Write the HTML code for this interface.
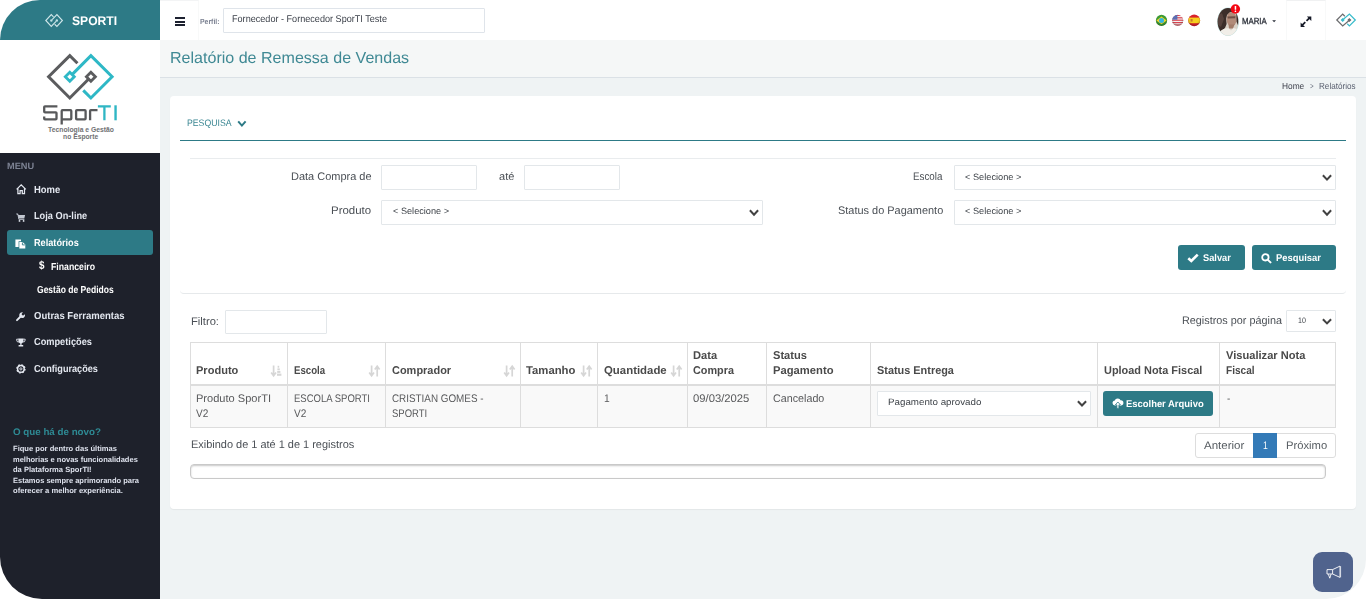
<!DOCTYPE html>
<html><head><meta charset="utf-8"><title>SporTI</title>
<style>
*{box-sizing:border-box;margin:0;padding:0}
html,body{width:1366px;height:599px;overflow:hidden;background:#fff;font-family:"Liberation Sans",sans-serif}
#app{position:absolute;left:0;top:0;width:1366px;height:599px;background:#eff3f4;border-bottom-right-radius:40px;overflow:hidden}
.t{position:absolute;white-space:nowrap;display:block;text-rendering:geometricPrecision}
.b{position:absolute}
svg{position:absolute;overflow:visible}

#side{position:absolute;left:0;top:0;width:160px;height:599px;background:#fff}
#shead{position:absolute;left:0;top:0;width:160px;height:40px;background:#2d7a86;border-top-left-radius:43px}
#sdark{position:absolute;left:0;top:153px;width:160px;height:446px;background:#1e212b;border-bottom-left-radius:42px}
#act{position:absolute;left:7px;top:230px;width:146px;height:25px;background:#2d7a86;border-radius:3px}
#top{position:absolute;left:160px;top:0;width:1206px;height:40px;background:#fff}
#tbar{position:absolute;left:160px;top:40px;width:1206px;height:38px;background:#f5f7f7;border-bottom:1px solid #dbe1e6}
#card{position:absolute;left:170px;top:96px;width:1186px;height:413px;background:#fff;border-radius:4px;box-shadow:0 1px 1px rgba(0,0,0,.05)}
.inp{position:absolute;background:#fff;border:1px solid #e3e7ea;border-radius:1px}
.btn{position:absolute;background:#2d7a86;border-radius:3px}
.ln{position:absolute;height:1px}
.vl{position:absolute;width:1px;background:#ddd;top:342px;height:86px}

</style></head><body>
<div id="app">
<div id="side"><div id="shead"></div><div id="sdark"></div><div id="act"></div></div>
<svg style="left:44.8px;top:14.0px" width="18.2" height="13.2" viewBox="0 0 19 14">
<g fill="none" stroke="#cfe6e9" stroke-width="1.2" stroke-linejoin="miter">
<path d="M8.9,3.0 L6.5,0.7 L0.7,6.9 L6.5,13.1 L11.6,7.9"/>
<path d="M10.1,10.9 L12.5,13.2 L18.3,6.9 L12.5,0.7 L7.4,6.0"/>
</g>
<circle cx="6.6" cy="6.9" r="1.25" fill="#bfe2e6"/><circle cx="12.4" cy="6.9" r="1.25" fill="#bfe2e6"/>
</svg>
<svg style="left:0;top:0" width="1366" height="599"><path d="M77.43,63.23 L69.80,55.60 L48.60,76.80 L69.80,98.00 L88.43,79.27" fill="none" stroke="#5b5c5e" stroke-width="3.0" stroke-linejoin="miter" stroke-linecap="butt"/><path d="M83.27,90.37 L90.90,98.00 L112.10,76.80 L90.90,55.60 L72.27,74.33" fill="none" stroke="#2eb8c6" stroke-width="3.0" stroke-linejoin="miter" stroke-linecap="butt"/><path d="M69.80,72.30 L74.30,76.80 L69.80,81.30 L65.30,76.80 Z" fill="#fff" stroke="#2eb8c6" stroke-width="2.8"/><path d="M90.90,72.30 L95.40,76.80 L90.90,81.30 L86.40,76.80 Z" fill="#fff" stroke="#5b5c5e" stroke-width="2.8"/></svg>
<svg style="left:0;top:0" width="1366" height="599">
<g fill="none" stroke="#58595b" stroke-width="2.3" stroke-linejoin="round" stroke-linecap="butt">
<path d="M57.4,106.3 H45.0 Q44.2,106.3 44.2,107.1 V111.5 Q44.2,112.3 45.0,112.3 H55.7 Q56.5,112.3 56.5,113.1 V118.5 Q56.5,119.3 55.7,119.3 H45.0 Q44.2,119.3 44.2,118.5 V116.6"/>
<path d="M61.7,124.5 V110.9 Q61.7,110.1 62.5,110.1 H70.5 Q71.3,110.1 71.3,110.9 V118.5 Q71.3,119.3 70.5,119.3 H61.7"/>
<path d="M76.9,110.1 H84.8 Q85.6,110.1 85.6,110.9 V118.5 Q85.6,119.3 84.8,119.3 H76.9 Q76.1,119.3 76.1,118.5 V110.9 Q76.1,110.1 76.9,110.1 Z"/>
<path d="M90.1,120.3 V110.9 Q90.1,110.1 90.9,110.1 H97.5"/>
</g>
<g fill="none" stroke="#2fb6c4" stroke-linecap="butt">
<path d="M97.9,106.35 H110.8 M104.4,106.3 V120.3" stroke-width="2.3"/>
<path d="M115.55,105.3 V120.3" stroke-width="2.4"/>
</g></svg>
<svg style="left:45px;top:124px" width="72" height="18" viewBox="0 0 72 18">
<text x="3.1" y="7.6" font-family="Liberation Sans, sans-serif" font-size="6.3" font-weight="bold" fill="#707173" textLength="65.9" lengthAdjust="spacingAndGlyphs">Tecnologia e Gestão</text>
<text x="18.1" y="14.6" font-family="Liberation Sans, sans-serif" font-size="6.3" font-weight="bold" fill="#707173" textLength="35.1" lengthAdjust="spacingAndGlyphs">no Esporte</text>
</svg>
<svg style="left:15.5px;top:183.6px" width="10.4" height="10.4" viewBox="0 0 10.4 10.4">
<path d="M0.6,5.4 L5.2,0.9 L9.8,5.4 M1.9,4.6 V9.6 H4.1 V6.6 H6.3 V9.6 H8.5 V4.6" fill="none" stroke="#e4e8f0" stroke-width="1.25" stroke-linejoin="miter"/></svg>
<svg style="left:16px;top:212.6px" width="9.6" height="9" viewBox="0 0 9.6 9">
<path d="M0.3,0.9 H1.8 L2.6,5.6 H8.3 L9.1,1.9 H2.2 Z" fill="#c3c8d2"/><path d="M0.3,0.9 H1.8 L2.9,6.4 H8.4" fill="none" stroke="#c3c8d2" stroke-width="0.9"/>
<circle cx="3.5" cy="7.9" r="0.9" fill="#e4e8f0"/><circle cx="7.6" cy="7.9" r="0.9" fill="#e4e8f0"/></svg>
<svg style="left:15.4px;top:238.6px" width="10.8" height="10" viewBox="0 0 10.8 10">
<path d="M0.4,0.4 H6 V2.2 H3.6 V7.9 H0.4 Z" fill="#fff"/>
<path d="M4.3,2.9 H7.6 L10.3,5.6 V9.6 H4.3 Z" fill="#fff"/>
<path d="M7.4,3.4 V5.9 H9.9" fill="none" stroke="#2d7a86" stroke-width="0.9"/></svg>
<svg style="left:15.8px;top:311.5px" width="9.2" height="9.2" viewBox="0 0 9.2 9.2">
<path d="M1.0,8.2 L5.4,3.8" stroke="#e4e8f0" stroke-width="1.9" stroke-linecap="round" fill="none"/>
<path d="M8.9,2.2 A2.9,2.9 0 1 1 6.9,0.3 L5.6,1.9 L6.0,3.2 L7.3,3.6 Z" fill="#e4e8f0"/></svg>
<svg style="left:15.8px;top:337.8px" width="9.8" height="9" viewBox="0 0 9.8 9">
<path d="M2.4,0.4 H7.4 V2.6 A2.5,2.8 0 0 1 2.4,2.6 Z" fill="#e4e8f0"/>
<path d="M2.6,1.2 H0.6 V1.9 A2.2,2.2 0 0 0 3.2,4.0 M7.2,1.2 H9.2 V1.9 A2.2,2.2 0 0 1 6.6,4.0" fill="none" stroke="#e4e8f0" stroke-width="0.9"/>
<path d="M4.3,5 H5.5 V7.0 H7.2 V8.6 H2.6 V7.0 H4.3 Z" fill="#e4e8f0"/></svg>
<svg style="left:15.8px;top:364.3px" width="9.8" height="9.8" viewBox="-4.9 -4.9 9.8 9.8">
<circle r="3.3" fill="none" stroke="#e4e8f0" stroke-width="1.5"/><circle r="3.9" fill="none" stroke="#e4e8f0" stroke-width="1.6" stroke-dasharray="1.53 1.53"/>
<circle r="1.1" fill="none" stroke="#e4e8f0" stroke-width="0.9"/></svg>
<div id="top"></div>
<div class="b" style="left:160px;top:0;width:39px;height:40px;border-top:1px solid #f3f4f5;border-right:1px solid #f8f9f9"></div>
<div class="b" style="left:1286px;top:0;width:40px;height:40px;border-top:1px solid #f0f1f2;border-right:1px solid #f8f9f9;border-left:1px solid #f8f9f9"></div>
<div class="b" style="left:174.8px;top:17px;width:10.6px;height:2px;background:#1d2130"></div>
<div class="b" style="left:174.8px;top:20.5px;width:10.6px;height:2px;background:#1d2130"></div>
<div class="b" style="left:174.8px;top:24px;width:10.6px;height:2px;background:#1d2130"></div>
<div class="inp" style="left:223.4px;top:8px;width:261.4px;height:24.5px;border-color:#dfe4ea"></div>
<svg style="left:1155px;top:14px" width="47" height="13" viewBox="0 0 47 13">
<defs><clipPath id="c1"><circle cx="6.5" cy="6.4" r="5.6"/></clipPath><clipPath id="c2"><circle cx="22.7" cy="6.4" r="5.6"/></clipPath><clipPath id="c3"><circle cx="39.2" cy="6.4" r="5.9"/></clipPath>
<radialGradient id="sh" cx="50%" cy="35%" r="65%"><stop offset="60%" stop-color="#000" stop-opacity="0"/><stop offset="100%" stop-color="#000" stop-opacity=".28"/></radialGradient></defs>
<g clip-path="url(#c1)"><rect x="0" y="0" width="13" height="13" fill="#3c9b35"/><path d="M1.3,6.4 L6.5,2.6 L11.7,6.4 L6.5,10.2 Z" fill="#f3d32a"/><circle cx="6.5" cy="6.4" r="2.5" fill="#35b5e0"/></g>
<circle cx="6.5" cy="6.4" r="5.6" fill="url(#sh)"/>
<g clip-path="url(#c2)"><rect x="16" y="0" width="14" height="13" fill="#f3f0f0"/>
<rect x="16" y="0.8" width="14" height="1.2" fill="#d9434f"/><rect x="16" y="3.2" width="14" height="1.2" fill="#d9434f"/><rect x="16" y="5.6" width="14" height="1.2" fill="#d9434f"/><rect x="16" y="8" width="14" height="1.2" fill="#d9434f"/><rect x="16" y="10.4" width="14" height="1.2" fill="#d9434f"/>
<rect x="16" y="0" width="6.4" height="5.7" fill="#5a6fb4"/></g>
<circle cx="22.7" cy="6.4" r="5.6" fill="url(#sh)"/>
<g clip-path="url(#c3)"><rect x="33" y="0" width="13" height="13" fill="#d9222c"/><rect x="33" y="3.6" width="13" height="5.6" fill="#f6cf1d"/><rect x="35.6" y="5" width="2" height="2.6" fill="#c9772b"/></g>
<circle cx="39.2" cy="6.4" r="5.9" fill="url(#sh)"/>
</svg>
<svg style="left:1216px;top:7px" width="24" height="30" viewBox="0 0 24 30">
<defs><clipPath id="av"><ellipse cx="12" cy="14.8" rx="10.4" ry="13.7"/></clipPath>
<filter id="bl" x="-20%" y="-20%" width="140%" height="140%"><feGaussianBlur stdDeviation="0.75"/></filter></defs>
<ellipse cx="12" cy="14.8" rx="10.9" ry="14.2" fill="#bfe6e6"/>
<g clip-path="url(#av)"><rect x="0" y="0" width="24" height="30" fill="#d9d2c8"/>
<g filter="url(#bl)">
<path d="M0,0 H24 V7 L21.5,5.5 L18,4.6 L14,5.2 L11,8 L10.2,12 L10.6,17 L9,21 L5,24.5 L0,24 Z" fill="#3a2d29"/>
<path d="M2,8 L6,6 L8,12 L5,20 L2,18 Z" fill="#54433c"/>
<ellipse cx="15.6" cy="12.2" rx="5.0" ry="7.2" fill="#b18b79"/>
<path d="M11.6,9.6 L19.4,9.2 L19.2,11.2 L11.8,11.6 Z" fill="#6e5147"/>
<path d="M20.2,5 L22.6,9 L22.4,19 L20.6,15 Z" fill="#3a2c28"/>
<path d="M12.5,17.5 L18.5,17.5 L17,21.5 L13,21.5 Z" fill="#a27b69"/>
<path d="M3.5,25 Q8,20.5 13,21.5 L15,23.5 L17.5,21 Q21,21.5 22.5,24 V30 H2 Z" fill="#f1eee8"/>
</g></g></svg>
<svg style="left:1230px;top:4px" width="11" height="11" viewBox="0 0 11 11"><circle cx="5.4" cy="5" r="4.7" fill="#f40612"/><rect x="4.7" y="2" width="1.5" height="3.8" rx=".4" fill="#fff"/><rect x="4.7" y="6.6" width="1.5" height="1.5" rx=".4" fill="#fff"/></svg>
<svg style="left:1272px;top:20px" width="5" height="3" viewBox="0 0 5 3"><path d="M0.2,0.2 H4.0 L2.1,2.2 Z" fill="#2a2e38"/></svg>
<svg style="left:0;top:0" width="1366" height="599">
<path d="M1306.5,20.9 L1309.6,17.8" stroke="#151926" stroke-width="1.7" fill="none"/>
<path d="M1305.3,22.1 L1302.3,25.1" stroke="#151926" stroke-width="1.7" fill="none"/>
<path d="M1306.9,16.6 H1311.3 V21.0 Z" fill="#151926"/><path d="M1300.6,22.6 V27.0 H1305.0 Z" fill="#151926"/></svg>
<svg style="left:0;top:0" width="1366" height="599"><path d="M1344.82,16.22 L1342.70,14.10 L1336.80,20.00 L1342.70,25.90 L1348.74,20.66" fill="none" stroke="#6b6c6e" stroke-width="1.25" stroke-linejoin="miter" stroke-linecap="butt"/><path d="M1347.28,23.78 L1349.40,25.90 L1355.30,20.00 L1349.40,14.10 L1343.36,19.34" fill="none" stroke="#38bccb" stroke-width="1.25" stroke-linejoin="miter" stroke-linecap="butt"/><path d="M1342.70,18.80 L1343.90,20.00 L1342.70,21.20 L1341.50,20.00 Z" fill="#38bccb" stroke="#38bccb" stroke-width="1.2"/><path d="M1349.40,18.80 L1350.60,20.00 L1349.40,21.20 L1348.20,20.00 Z" fill="#6b6c6e" stroke="#6b6c6e" stroke-width="1.2"/></svg>
<div id="tbar"></div>
<div id="card"></div>
<svg style="left:0;top:0" width="1366" height="599"><path d="M238.2,121.4 L241.9,125.6 L245.6,121.4" fill="none" stroke="#2d7a86" stroke-width="2.0" stroke-linecap="butt" stroke-linejoin="miter"/></svg>
<div class="ln" style="left:180px;top:139.7px;width:1166px;height:1.4px;background:#2d7a86"></div>
<div class="ln" style="left:190px;top:158px;width:1146px;background:#e9ecee"></div>
<div class="inp" style="left:381px;top:165px;width:96px;height:24.5px"></div>
<div class="inp" style="left:524px;top:165px;width:96px;height:24.5px"></div>
<div class="inp" style="left:954px;top:165px;width:382px;height:24.5px"></div>
<div class="inp" style="left:381px;top:200px;width:382px;height:24.5px"></div>
<div class="inp" style="left:954px;top:200px;width:382px;height:24.5px"></div>
<div class="inp" style="left:225px;top:310px;width:102px;height:23.8px"></div>
<div class="inp" style="left:1286px;top:310.4px;width:50px;height:21.2px"></div>
<svg style="left:0;top:0" width="1366" height="599"><path d="M1322.9,175.2 L1327.0,179.6 L1331.1,175.2" fill="none" stroke="#424242" stroke-width="2.0" stroke-linecap="butt" stroke-linejoin="miter"/></svg>
<svg style="left:0;top:0" width="1366" height="599"><path d="M1322.9,210.3 L1327.0,214.7 L1331.1,210.3" fill="none" stroke="#424242" stroke-width="2.0" stroke-linecap="butt" stroke-linejoin="miter"/></svg>
<svg style="left:0;top:0" width="1366" height="599"><path d="M749.9,210.3 L754.0,214.7 L758.1,210.3" fill="none" stroke="#424242" stroke-width="2.0" stroke-linecap="butt" stroke-linejoin="miter"/></svg>
<svg style="left:0;top:0" width="1366" height="599"><path d="M1322.9,319.2 L1327.0,323.4 L1331.1,319.2" fill="none" stroke="#424242" stroke-width="2.0" stroke-linecap="butt" stroke-linejoin="miter"/></svg>
<div class="btn" style="left:1178px;top:245px;width:67px;height:25px"></div>
<div class="btn" style="left:1252px;top:245px;width:84px;height:25px"></div>
<svg style="left:1186.6px;top:252.8px" width="12" height="10" viewBox="0 0 12 10"><path d="M1.3,5.2 L4.3,8.0 L10.7,1.6" fill="none" stroke="#fff" stroke-width="2.6"/></svg>
<svg style="left:1260.8px;top:253.2px" width="11" height="10" viewBox="0 0 11 10"><circle cx="4.4" cy="4.3" r="3.2" fill="none" stroke="#fff" stroke-width="1.8"/><path d="M6.9,6.9 L9.5,9.4" stroke="#fff" stroke-width="2.0" stroke-linecap="round"/></svg>
<div class="b" style="left:180px;top:284px;width:1166px;height:10px;border-bottom:1px solid #e6e9eb;border-radius:0 0 4px 4px"></div>
<div class="b" style="left:190px;top:386px;width:1146px;height:42px;background:#f9f9f9"></div>
<div class="b" style="left:190px;top:342px;width:1146px;height:86px;border:1px solid #ddd"></div>
<div class="ln" style="left:190px;top:384px;width:1146px;height:2px;background:#ddd"></div>
<div class="vl" style="left:287px"></div>
<div class="vl" style="left:385px"></div>
<div class="vl" style="left:520px"></div>
<div class="vl" style="left:597px"></div>
<div class="vl" style="left:687px"></div>
<div class="vl" style="left:766px"></div>
<div class="vl" style="left:870px"></div>
<div class="vl" style="left:1097px"></div>
<div class="vl" style="left:1219px"></div>
<svg style="left:271px;top:364.6px" width="11" height="12" viewBox="0 0 11 12"><path d="M2.6,0.6 V10.6 M0.2,7.6 L2.6,10.9 L5.0,7.6" fill="none" stroke="#d6d6d6" stroke-width="1.7"/><rect x="6.6" y="0.8" width="1.6" height="1.9" fill="#d6d6d6"/><rect x="6.4" y="3.4" width="2.4" height="1.9" fill="#d6d6d6"/><rect x="6.2" y="6.0" width="3.2" height="1.9" fill="#d6d6d6"/><rect x="6.0" y="8.6" width="4.4" height="2.2" fill="#d6d6d6"/></svg>
<svg style="left:369px;top:364.6px" width="11" height="12" viewBox="0 0 11 12"><path d="M2.6,0.6 V10.6 M0.2,7.6 L2.6,10.9 L5.0,7.6" fill="none" stroke="#d6d6d6" stroke-width="1.7"/><path d="M8.2,11.4 V1.4 M5.8,4.4 L8.2,1.1 L10.6,4.4" fill="none" stroke="#d6d6d6" stroke-width="1.7"/></svg>
<svg style="left:504px;top:364.6px" width="11" height="12" viewBox="0 0 11 12"><path d="M2.6,0.6 V10.6 M0.2,7.6 L2.6,10.9 L5.0,7.6" fill="none" stroke="#d6d6d6" stroke-width="1.7"/><path d="M8.2,11.4 V1.4 M5.8,4.4 L8.2,1.1 L10.6,4.4" fill="none" stroke="#d6d6d6" stroke-width="1.7"/></svg>
<svg style="left:581px;top:364.6px" width="11" height="12" viewBox="0 0 11 12"><path d="M2.6,0.6 V10.6 M0.2,7.6 L2.6,10.9 L5.0,7.6" fill="none" stroke="#d6d6d6" stroke-width="1.7"/><path d="M8.2,11.4 V1.4 M5.8,4.4 L8.2,1.1 L10.6,4.4" fill="none" stroke="#d6d6d6" stroke-width="1.7"/></svg>
<svg style="left:671px;top:364.6px" width="11" height="12" viewBox="0 0 11 12"><path d="M2.6,0.6 V10.6 M0.2,7.6 L2.6,10.9 L5.0,7.6" fill="none" stroke="#d6d6d6" stroke-width="1.7"/><path d="M8.2,11.4 V1.4 M5.8,4.4 L8.2,1.1 L10.6,4.4" fill="none" stroke="#d6d6d6" stroke-width="1.7"/></svg>
<div class="inp" style="left:877px;top:391px;width:214px;height:24.5px"></div>
<svg style="left:0;top:0" width="1366" height="599"><path d="M1077.9,401.2 L1082.0,405.5 L1086.1,401.2" fill="none" stroke="#424242" stroke-width="2.0" stroke-linecap="butt" stroke-linejoin="miter"/></svg>
<div class="btn" style="left:1103px;top:391px;width:110px;height:24.5px"></div>
<svg style="left:1112px;top:398.4px" width="12" height="11.4" viewBox="0 0 12 11.4">
<g fill="#fff"><circle cx="3.0" cy="4.9" r="2.5"/><circle cx="5.7" cy="3.3" r="2.9"/><circle cx="8.8" cy="4.8" r="2.6"/><rect x="3" y="5" width="6" height="2.4"/></g>
<path d="M5.9,4.0 L8.5,6.9 H6.9 V10.4 H4.9 V6.9 H3.3 Z" fill="#fff" stroke="#2d7a86" stroke-width="0.8"/></svg>
<div class="b" style="left:1195px;top:433px;width:141px;height:24.8px;border:1px solid #ddd;border-radius:3px;background:#fff"></div>
<div class="b" style="left:1253px;top:433px;width:24px;height:24.8px;background:#337ab7"></div>
<div class="b" style="left:190px;top:464.4px;width:1136px;height:14.4px;border:1px solid #c9c9c9;border-radius:4px;background:#fff;box-shadow:inset 0 1px 2px rgba(0,0,0,.22)"></div>
<div class="b" style="left:1313px;top:552px;width:40px;height:40px;background:#50638d;border-radius:9px"></div>
<svg style="left:1325.5px;top:565px" width="16" height="15" viewBox="0 0 16 15">
<g fill="none" stroke="#fff" stroke-width="0.9" stroke-linejoin="round">
<path d="M1,4.6 H6.6 V9.0 H1 Z"/><path d="M6.6,4.6 L14.0,1.1 V12.4 L6.6,9.0"/><path d="M14.6,1.2 V12.3" stroke-opacity=".7"/>
<path d="M2.3,9.2 L3.8,13.2 L5.0,9.2"/></g></svg>
<span class="t" style="left:71.50px;top:13px;font-size:12.5px;line-height:17px;font-weight:bold;color:#ffffff;transform-origin:0 12px;transform:scale(0.9683,1);">SPORTI</span>
<span class="t" style="left:7.00px;top:160px;font-size:9.2px;line-height:12px;font-weight:bold;color:#7d8394;transform-origin:0 9px;transform:scale(1.0031,1);">MENU</span>
<span class="t" style="left:33.90px;top:184px;font-size:10.2px;line-height:14px;font-weight:bold;color:#e4e8f0;transform-origin:0 9px;transform:scale(0.9288,1);">Home</span>
<span class="t" style="left:33.90px;top:210px;font-size:10.2px;line-height:14px;font-weight:bold;color:#e4e8f0;transform-origin:0 9px;transform:scale(0.9038,1);">Loja On-line</span>
<span class="t" style="left:34.00px;top:237px;font-size:10.2px;line-height:14px;font-weight:bold;color:#ffffff;transform-origin:0 9px;transform:scale(0.8993,1);">Relatórios</span>
<span class="t" style="left:38.70px;top:258px;font-size:11.6px;line-height:16px;font-weight:bold;color:#ffffff;transform-origin:0 11px;transform:scale(0.8429,1);">$</span>
<span class="t" style="left:51.00px;top:261px;font-size:10.2px;line-height:14px;font-weight:bold;color:#ffffff;transform-origin:0 9px;transform:scale(0.8559,1);">Financeiro</span>
<span class="t" style="left:37.20px;top:284px;font-size:10.2px;line-height:14px;font-weight:bold;color:#ffffff;transform-origin:0 9px;transform:scale(0.8365,1);">Gestão de Pedidos</span>
<span class="t" style="left:34.00px;top:310px;font-size:10.2px;line-height:14px;font-weight:bold;color:#e4e8f0;transform-origin:0 9px;transform:scale(0.9356,1);">Outras Ferramentas</span>
<span class="t" style="left:34.00px;top:336px;font-size:10.2px;line-height:14px;font-weight:bold;color:#e4e8f0;transform-origin:0 9px;transform:scale(0.9051,1);">Competições</span>
<span class="t" style="left:34.00px;top:363px;font-size:10.2px;line-height:14px;font-weight:bold;color:#e4e8f0;transform-origin:0 9px;transform:scale(0.8959,1);">Configurações</span>
<span class="t" style="left:13.40px;top:426px;font-size:9.6px;line-height:13px;font-weight:bold;color:#2e8a94;transform-origin:0 9px;transform:scale(1.0186,1);">O que há de novo?</span>
<span class="t" style="left:13.40px;top:444px;font-size:7.6px;line-height:10px;font-weight:bold;color:#dde1ec;transform-origin:0 7px;transform:scale(0.9982,1);">Fique por dentro das últimas</span>
<span class="t" style="left:13.40px;top:455px;font-size:7.6px;line-height:10px;font-weight:bold;color:#dde1ec;transform-origin:0 7px;transform:scale(0.9892,1);">melhorias e novas funcionalidades</span>
<span class="t" style="left:13.40px;top:465px;font-size:7.6px;line-height:10px;font-weight:bold;color:#dde1ec;transform-origin:0 7px;transform:scale(0.9965,1);">da Plataforma SporTI!</span>
<span class="t" style="left:13.40px;top:476px;font-size:7.6px;line-height:10px;font-weight:bold;color:#dde1ec;transform-origin:0 7px;transform:scale(0.9889,1);">Estamos sempre aprimorando para</span>
<span class="t" style="left:13.40px;top:486px;font-size:7.6px;line-height:10px;font-weight:bold;color:#dde1ec;transform-origin:0 7px;transform:scale(1.0006,1);">oferecer a melhor experiência.</span>
<span class="t" style="left:200.00px;top:17px;font-size:7.4px;line-height:10px;font-weight:bold;color:#7c8292;transform-origin:0 7px;transform:scale(0.9324,1);">Perfil:</span>
<span class="t" style="left:232.20px;top:13px;font-size:9.8px;line-height:13px;font-weight:normal;color:#3a3f48;transform-origin:0 9px;transform:scale(0.9278,1);">Fornecedor - Fornecedor SporTI Teste</span>
<span class="t" style="left:1242.00px;top:15px;font-size:8.8px;line-height:12px;font-weight:normal;color:#2c303a;transform-origin:0 9px;transform:scale(0.8860,1);-webkit-text-stroke:0.3px #2c303a;">MARIA</span>
<span class="t" style="left:170.10px;top:48px;font-size:16px;line-height:21px;font-weight:normal;color:#3f8994;transform-origin:0 15px;transform:scale(1.0031,1);">Relatório de Remessa de Vendas</span>
<span class="t" style="left:1281.80px;top:80px;font-size:8.8px;line-height:12px;font-weight:normal;color:#3c3f4a;transform-origin:0 9px;transform:scale(0.9460,1);">Home</span>
<span class="t" style="left:1309.70px;top:80px;font-size:8.8px;line-height:12px;font-weight:normal;color:#5a6070;transform-origin:0 9px;transform:scale(0.7000,1);">&gt;</span>
<span class="t" style="left:1319.00px;top:80px;font-size:8.8px;line-height:12px;font-weight:normal;color:#5a6070;transform-origin:0 9px;transform:scale(0.9228,1);">Relatórios</span>
<span class="t" style="left:187.40px;top:116px;font-size:9.4px;line-height:13px;font-weight:normal;color:#3a8692;transform-origin:0 10px;transform:scale(0.9285,1);">PESQUISA</span>
<span class="t" style="left:290.50px;top:170px;font-size:11.0px;line-height:15px;font-weight:normal;color:#4a4f55;transform-origin:0 10px;transform:scale(0.9977,1);">Data Compra de</span>
<span class="t" style="left:498.80px;top:170px;font-size:11.0px;line-height:15px;font-weight:normal;color:#4a4f55;transform-origin:0 10px;transform:scale(1.0017,1);">até</span>
<span class="t" style="left:913.30px;top:170px;font-size:11.0px;line-height:15px;font-weight:normal;color:#4a4f55;transform-origin:0 10px;transform:scale(0.8909,1);">Escola</span>
<span class="t" style="left:330.90px;top:204px;font-size:11.0px;line-height:15px;font-weight:normal;color:#4a4f55;transform-origin:0 10px;transform:scale(1.0414,1);">Produto</span>
<span class="t" style="left:838.40px;top:204px;font-size:11.0px;line-height:15px;font-weight:normal;color:#4a4f55;transform-origin:0 10px;transform:scale(0.9945,1);">Status do Pagamento</span>
<span class="t" style="left:965.30px;top:171px;font-size:9.2px;line-height:12px;font-weight:normal;color:#3a3f45;transform-origin:0 9px;transform:scale(1.0032,1);">&lt; Selecione &gt;</span>
<span class="t" style="left:392.50px;top:205px;font-size:9.2px;line-height:12px;font-weight:normal;color:#3a3f45;transform-origin:0 9px;transform:scale(0.9978,1);">&lt; Selecione &gt;</span>
<span class="t" style="left:965.30px;top:205px;font-size:9.2px;line-height:12px;font-weight:normal;color:#3a3f45;transform-origin:0 9px;transform:scale(1.0032,1);">&lt; Selecione &gt;</span>
<span class="t" style="left:1202.70px;top:252px;font-size:9.8px;line-height:13px;font-weight:bold;color:#ffffff;transform-origin:0 9px;transform:scale(0.9459,1);">Salvar</span>
<span class="t" style="left:1276.20px;top:252px;font-size:9.8px;line-height:13px;font-weight:bold;color:#ffffff;transform-origin:0 9px;transform:scale(0.9592,1);">Pesquisar</span>
<span class="t" style="left:190.50px;top:315px;font-size:11.0px;line-height:15px;font-weight:normal;color:#4a4f55;transform-origin:0 10px;transform:scale(1.0166,1);">Filtro:</span>
<span class="t" style="left:1181.80px;top:314px;font-size:11.0px;line-height:15px;font-weight:normal;color:#4a4f55;transform-origin:0 10px;transform:scale(0.9845,1);">Registros por página</span>
<span class="t" style="left:1297.50px;top:315px;font-size:7.9px;line-height:11px;font-weight:normal;color:#3a3f45;transform-origin:0 8px;transform:scale(0.8947,1);">10</span>
<span class="t" style="left:196.40px;top:364px;font-size:11.3px;line-height:15px;font-weight:bold;color:#4a4a4a;transform-origin:0 10px;transform:scale(0.9771,1);">Produto</span>
<span class="t" style="left:294.20px;top:364px;font-size:11.3px;line-height:15px;font-weight:bold;color:#4a4a4a;transform-origin:0 10px;transform:scale(0.8562,1);">Escola</span>
<span class="t" style="left:391.50px;top:364px;font-size:11.3px;line-height:15px;font-weight:bold;color:#4a4a4a;transform-origin:0 10px;transform:scale(0.9710,1);">Comprador</span>
<span class="t" style="left:526.30px;top:364px;font-size:11.3px;line-height:15px;font-weight:bold;color:#4a4a4a;transform-origin:0 10px;transform:scale(1.0005,1);">Tamanho</span>
<span class="t" style="left:603.60px;top:364px;font-size:11.3px;line-height:15px;font-weight:bold;color:#4a4a4a;transform-origin:0 10px;transform:scale(1.0088,1);">Quantidade</span>
<span class="t" style="left:693.20px;top:349px;font-size:11.3px;line-height:15px;font-weight:bold;color:#4a4a4a;transform-origin:0 10px;transform:scale(0.9840,1);">Data</span>
<span class="t" style="left:693.20px;top:364px;font-size:11.3px;line-height:15px;font-weight:bold;color:#4a4a4a;transform-origin:0 10px;transform:scale(0.9585,1);">Compra</span>
<span class="t" style="left:772.80px;top:349px;font-size:11.3px;line-height:15px;font-weight:bold;color:#4a4a4a;transform-origin:0 10px;transform:scale(0.9842,1);">Status</span>
<span class="t" style="left:772.80px;top:364px;font-size:11.3px;line-height:15px;font-weight:bold;color:#4a4a4a;transform-origin:0 10px;transform:scale(0.9936,1);">Pagamento</span>
<span class="t" style="left:876.70px;top:364px;font-size:11.3px;line-height:15px;font-weight:bold;color:#4a4a4a;transform-origin:0 10px;transform:scale(0.9647,1);">Status Entrega</span>
<span class="t" style="left:1104.00px;top:364px;font-size:11.3px;line-height:15px;font-weight:bold;color:#4a4a4a;transform-origin:0 10px;transform:scale(0.9670,1);">Upload Nota Fiscal</span>
<span class="t" style="left:1226.40px;top:349px;font-size:11.3px;line-height:15px;font-weight:bold;color:#4a4a4a;transform-origin:0 10px;transform:scale(0.9828,1);">Visualizar Nota</span>
<span class="t" style="left:1226.40px;top:364px;font-size:11.3px;line-height:15px;font-weight:bold;color:#4a4a4a;transform-origin:0 10px;transform:scale(0.8938,1);">Fiscal</span>
<span class="t" style="left:196.40px;top:392px;font-size:11.0px;line-height:15px;font-weight:normal;color:#58595b;transform-origin:0 10px;transform:scale(1.0049,1);">Produto SporTI</span>
<span class="t" style="left:196.40px;top:407px;font-size:11.0px;line-height:15px;font-weight:normal;color:#58595b;transform-origin:0 10px;transform:scale(0.9148,1);">V2</span>
<span class="t" style="left:294.20px;top:392px;font-size:11.0px;line-height:15px;font-weight:normal;color:#58595b;transform-origin:0 10px;transform:scale(0.8645,1);">ESCOLA SPORTI</span>
<span class="t" style="left:294.20px;top:407px;font-size:11.0px;line-height:15px;font-weight:normal;color:#58595b;transform-origin:0 10px;transform:scale(0.9148,1);">V2</span>
<span class="t" style="left:391.50px;top:392px;font-size:11.0px;line-height:15px;font-weight:normal;color:#58595b;transform-origin:0 10px;transform:scale(0.8965,1);">CRISTIAN GOMES -</span>
<span class="t" style="left:391.50px;top:407px;font-size:11.0px;line-height:15px;font-weight:normal;color:#58595b;transform-origin:0 10px;transform:scale(0.8625,1);">SPORTI</span>
<span class="t" style="left:603.60px;top:392px;font-size:11.0px;line-height:15px;font-weight:normal;color:#58595b;transform-origin:0 10px;transform:scale(0.9333,1);">1</span>
<span class="t" style="left:693.20px;top:392px;font-size:11.0px;line-height:15px;font-weight:normal;color:#58595b;transform-origin:0 10px;transform:scale(1.0230,1);">09/03/2025</span>
<span class="t" style="left:772.80px;top:392px;font-size:11.0px;line-height:15px;font-weight:normal;color:#58595b;transform-origin:0 10px;transform:scale(0.9757,1);">Cancelado</span>
<span class="t" style="left:887.70px;top:396px;font-size:9.2px;line-height:12px;font-weight:normal;color:#3a3f45;transform-origin:0 9px;transform:scale(1.0633,1);">Pagamento aprovado</span>
<span class="t" style="left:1126.00px;top:398px;font-size:9.8px;line-height:13px;font-weight:bold;color:#ffffff;transform-origin:0 9px;transform:scale(0.9614,1);">Escolher Arquivo</span>
<span class="t" style="left:1226.60px;top:392px;font-size:11.0px;line-height:15px;font-weight:normal;color:#58595b;transform-origin:0 10px;transform:scale(0.9000,1);">-</span>
<span class="t" style="left:191.00px;top:438px;font-size:11.0px;line-height:15px;font-weight:normal;color:#4a4f55;transform-origin:0 10px;transform:scale(0.9958,1);">Exibindo de 1 até 1 de 1 registros</span>
<span class="t" style="left:1203.70px;top:439px;font-size:11.0px;line-height:15px;font-weight:normal;color:#555b60;transform-origin:0 10px;transform:scale(1.0475,1);">Anterior</span>
<span class="t" style="left:1262.60px;top:439px;font-size:11.0px;line-height:15px;font-weight:normal;color:#ffffff;transform-origin:0 10px;transform:scale(0.7833,1);">1</span>
<span class="t" style="left:1285.70px;top:439px;font-size:11.0px;line-height:15px;font-weight:normal;color:#555b60;transform-origin:0 10px;transform:scale(1.0193,1);">Próximo</span>
</div>
</body></html>
